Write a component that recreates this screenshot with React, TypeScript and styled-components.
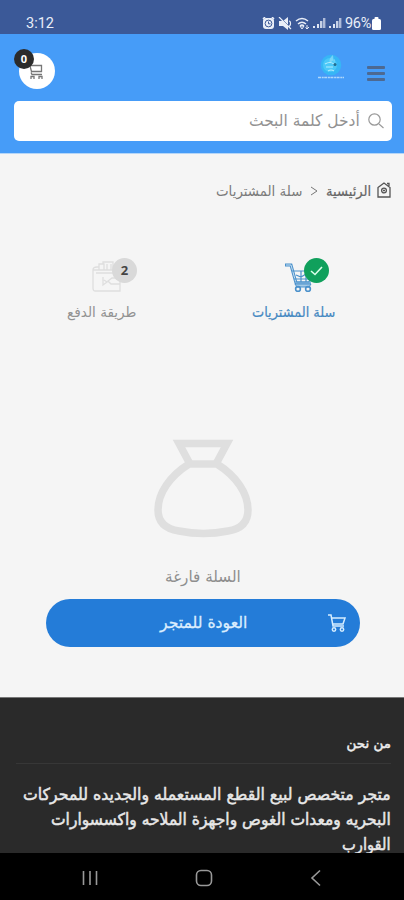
import React, { useLayoutEffect, useRef, useState } from "react";
import styled, { createGlobalStyle } from "styled-components";

const Global = createGlobalStyle`
  * { box-sizing: border-box; }
  body { margin: 0; overflow: hidden; background: #f5f5f5; }
`;
const Screen = styled.div`
  width: 404px; height: 900px; display: flex; flex-direction: column; overflow: hidden;
  background: #f5f5f5; font-family: "DejaVu Sans", "Noto Sans", sans-serif;
`;
const StatusBar = styled.div`
  direction: ltr; height: 34px; flex: none; background: #3b5998; color: #e9eef8;
  display: flex; justify-content: space-between; padding: 13px 23px 0 26px;
  font: 14.5px/21px Roboto, sans-serif;
`;
const StatusRight = styled.div`
  display: flex; align-items: center; height: 20px;
  svg { display: block; margin-right: 3px; }
  svg:last-child { margin: 0; }
`;
const Percent = styled.span`font-size: 14.5px; letter-spacing: -0.3px; margin-right: 1px;`;
const Header = styled.header`
  height: 120px; flex: none; background: #469cf8; padding: 18px 12px 0 14px;
  border-bottom: 1px solid #b5d6f8;
`;
const HeaderRow = styled.div`display: flex; height: 48px; align-items: flex-start;`;
const MenuLines = styled.div`
  width: 18px; margin: 14px 7px 0 22px; display: grid; gap: 3px;
  i { height: 3px; background: #4d6991; border-radius: 1px; }
`;
const CartButton = styled.div`
  position: relative; width: 36px; height: 36px; margin: 1px auto 0 5px; border-radius: 50%;
  background: #fff; display: grid; place-items: center;
  > svg { margin: 2px 0 0 -2px; }
`;
const CartCount = styled.span`
  position: absolute; left: -5px; top: -4px; width: 20px; height: 20px; border-radius: 50%;
  background: #2b2b2b; color: #fff; font: bold 11px/20px "Open Sans", sans-serif; text-align: center;
`;
const SearchBox = styled.div`
  height: 40px; margin-top: 1px; background: #fff; border-radius: 5px;
  display: flex; align-items: center; gap: 7px; padding-right: 7px;
`;
const Main = styled.main`height: 543px; flex: none; display: flex; flex-direction: column;`;
const Crumbs = styled.nav`
  display: flex; align-items: center; height: 22px; margin-top: 26px; padding-right: 13px;
  > svg { flex: none; }
`;
const HomeIcon = styled.svg`margin: 0 0 3px 6px;`;
const CrumbArrow = styled.svg`margin: 0 8px 0 8px;`;
const Steps = styled.div`
  display: grid; grid-template-columns: 192px 192px; margin-top: 55px; padding-right: 14px;
`;
const Step = styled.div`display: flex; flex-direction: column; align-items: center;`;
const StepIcon = styled.div`position: relative; width: 60px; height: 44px;`;
const StepBadge = styled.span<{ $done?: boolean }>`
  position: absolute; left: 40px; top: 1px; width: 25px; height: 25px; border-radius: 50%;
  display: grid; place-items: center; background: ${(p) => (p.$done ? "#10a05c" : "#d9d9d9")};
  color: #444; font: bold 13px/25px "Open Sans", sans-serif;
`;
const Empty = styled.section`
  display: flex; flex-direction: column; align-items: center; margin-top: 114px; padding-left: 2px;
`;
const BackButton = styled.button`
  width: 314px; height: 48px; margin: 8px 0 0; border: 0; border-radius: 24px; background: #247cd8;
  color: #dceefe; display: flex; align-items: center; padding: 0 13px 0 0; font-family: inherit; gap: 80px;
`;
const EmptyLabel = styled.div`margin-top: 23px;`;
const Footer = styled.footer`
  height: 156px; flex: none; background: #2a2a2a; overflow: hidden; padding: 31px 13px 0 16px;
  border-top: 1px solid #777;
`;
const Rule = styled.hr`border: 0; height: 1px; background: #373737; margin: 6px 0 18px;`;
const NavBar = styled.div`
  height: 47px; flex: none; background: #000; direction: ltr; display: flex; align-items: center;
  padding: 3px 82px 0 82px; justify-content: space-between;
`;
const FitBox = styled.div<{ $w: number; $h: number }>`
  width: ${(p) => p.$w}px; height: ${(p) => p.$h}px; flex: none; direction: rtl; white-space: nowrap;
`;
const FitInner = styled.span<{ $size: number; $h: number; $color: string; $weight: number }>`
  display: inline-block; transform-origin: right center; font-size: ${(p) => p.$size}px;
  line-height: ${(p) => p.$h}px; color: ${(p) => p.$color}; -webkit-text-stroke: ${(p) => p.$weight}px ${(p) => p.$color};
  vertical-align: top;
`;

type LabelProps = { text: string; width: number; size?: number; height?: number; color: string; weight?: number };

/* Condenses a single line of text to the width its slot offers. */
function Label({ text, width, size = 14, height = 22, color, weight = 0 }: LabelProps) {
  const ref = useRef<HTMLSpanElement>(null);
  const [scale, setScale] = useState(1);
  useLayoutEffect(() => {
    if (ref.current) setScale(width / ref.current.offsetWidth);
  }, [text, width, size]);
  return (
    <FitBox $w={width} $h={height}>
      <FitInner ref={ref} $size={size} $h={height} $color={color} $weight={weight} style={{ transform: `scaleX(${scale})` }}>
        {text}
      </FitInner>
    </FitBox>
  );
}

const Signal = () => (
  <svg width="13" height="12" viewBox="0 0 13 12" fill="#dfe6f4">
    <rect x="0" y="9" width="2" height="2" /><rect x="4" y="7" width="2" height="4" />
    <rect x="7" y="4" width="2.4" height="7" opacity=".85" /><rect x="10" y="1" width="2.4" height="10" opacity=".7" />
  </svg>
);

function StatusIcons() {
  return (
    <StatusRight>
      <svg width="13" height="12" viewBox="0 0 13 12">
        <rect x="1" y="1" width="11" height="11" rx="3" fill="#e9eef8" />
        <path d="M1 2l2-2M12 2l-2-2" stroke="#e9eef8" strokeWidth="1.5" />
        <circle cx="6.5" cy="6.5" r="3.4" fill="none" stroke="#3b5998" />
        <path d="M6.5 4.5v2.3h2" stroke="#3b5998" fill="none" />
      </svg>
      <svg width="14" height="13" viewBox="0 0 14 13">
        <path d="M1 4h4l5-4v13L5 9H1z" fill="#e9eef8" />
        <path d="M2 0l11 11" stroke="#3b5998" /><path d="M1 0l12 12M11 4c2 0 2 5 0 5" stroke="#e9eef8" strokeWidth="1.2" fill="none" />
      </svg>
      <svg width="15" height="13" viewBox="0 0 15 13" fill="none" stroke="#e9eef8" strokeWidth="1.5">
        <path d="M1 4q6-5 12 0M3 7q4-3.5 8 0M5 9q2-2 4 0" /><path d="M7 12l2-3H5zM12 8v4M10.5 10.5L12 12l2-2" strokeWidth="1" />
      </svg>
      <Signal />
      <Signal />
      <Percent>96%</Percent>
      <svg width="9" height="13" viewBox="0 0 9 13" fill="#fff"><rect x="0" y="2" width="9" height="11" rx="1.5" /><rect x="2.5" y="0" width="4" height="3" rx="1" /></svg>
    </StatusRight>
  );
}

const Logo = () => (
  <svg width="28" height="30" viewBox="0 0 28 30">
    <circle cx="14" cy="13" r="10.3" fill="#37b6f5" />
    <circle cx="13" cy="13" r="7" fill="#4bc8f8" />
    <path d="M16 3q-5 4-3 8l5-4-1 6" fill="#8bdcf8" opacity=".75" />
    <path d="M8 12q5-3 9 0M11 19q3-2 6 0M9 15h7" stroke="#c9f4ff" strokeWidth="1.2" fill="none" opacity=".8" />
    <circle cx="18" cy="12.5" r="1.5" fill="#236d91" />
    <path d="M1 25.5h26" stroke="#c2e2fb" strokeWidth="1.3" strokeDasharray="3 .7 2 .5" opacity=".85" />
  </svg>
);

const StepCart = () => (
  <svg width="30" height="29" viewBox="0 0 30 29" fill="none" stroke="#4b91cb">
    <path d="M1 2h6l5 18h15" strokeWidth="3" /><path d="M2 2h5l5 18h15" stroke="#c7e0f3" strokeWidth="1" />
    <path d="M8 8h20l-3 11H11M10 16h16M17 8v11M22 10v9M12 12l5 2 5-3" strokeWidth="1.2" />
    <path d="M11 21h16l-2 3H13z" fill="#a4cae7" /><circle cx="14" cy="26" r="2.4" strokeWidth="1.6" /><circle cx="24" cy="26" r="2.4" strokeWidth="1.6" />
  </svg>
);

const StepWallet = () => (
  <svg width="30" height="33" viewBox="0 0 30 33" fill="none" stroke="#dedede" strokeWidth="1.3">
    <path d="M1 9h27v21H3q-2 0-2-3zM1 9q0-3 4-3h2v3M7 9V3h5v6M11 3V1h10v8M15 3v6M19 3v6M4 12h20" />
    <path d="M28 17h-8l-4 3 3 3h9M11 16v8l4-3-3-2" />
  </svg>
);

export default function App() {
  return (
    <Screen dir="rtl">
      <Global />
      <StatusBar><span>3:12</span><StatusIcons /></StatusBar>
      <Header>
        <HeaderRow>
          <MenuLines><i /><i /><i /></MenuLines>
          <Logo />
          <CartButton>
            <svg width="16" height="16" viewBox="0 0 16 16" fill="none" stroke="#777" strokeWidth="1.3">
              <path d="M1 1.5h12.5v6H3.5L2 2M3 8.5l1 2h10" /><path d="M3 15v-2.5h3V15M11 15v-2.5h3V15" />
            </svg>
            <CartCount>0</CartCount>
          </CartButton>
        </HeaderRow>
        <SearchBox>
          <svg width="18" height="18" viewBox="0 0 18 18" fill="none" stroke="#999" strokeWidth="1.2"><circle cx="7.5" cy="7.5" r="5.7" /><path d="M12 12l4.5 4" /></svg>
          <Label text="أدخل كلمة البحث" width={111} size={16} color="#929292" />
        </SearchBox>
      </Header>
      <Main>
        <Crumbs>
          <HomeIcon width="14" height="16" viewBox="0 0 14 16" fill="none" stroke="#555" strokeWidth="1.3"><path d="M1 5.5L7 1l6 4.5V15H1zM10 1.5h2V4" /><circle cx="7" cy="8.5" r="2.4" /><path d="M6 8.5h2" /></HomeIcon>
          <Label text="الرئيسية" width={45} size={14} color="#666" weight={0.2} />
          <CrumbArrow width="8" height="10" viewBox="0 0 8 10" fill="none" stroke="#777"><path d="M1 1l6 4-6 4" /></CrumbArrow>
          <Label text="سلة المشتريات" width={86} size={14} color="#7b7b7b" />
        </Crumbs>
        <Steps>
          <Step>
            <StepIcon>
              <svg width="60" height="43" viewBox="0 0 60 43"><g transform="translate(20 6)"><StepCart /></g></svg>
              <StepBadge $done><svg width="13" height="10" viewBox="0 0 13 10" fill="none" stroke="#d9ffe9" strokeWidth="1.6"><path d="M1 5l4 3.5L12 1" /></svg></StepBadge>
            </StepIcon>
            <Label text="سلة المشتريات" width={83} size={14} color="#4689c2" weight={0.2} />
          </Step>
          <Step>
            <StepIcon>
              <svg width="60" height="43" viewBox="0 0 60 43"><g transform="translate(20 4)"><StepWallet /></g></svg>
              <StepBadge>2</StepBadge>
            </StepIcon>
            <Label text="طريقة الدفع" width={69} size={14} color="#929292" />
          </Step>
        </Steps>
        <Empty>
          <svg width="98" height="102" viewBox="0 0 98 102" fill="none" stroke="#dfdfdf" strokeWidth="7.5">
            <path d="M25 6.5h48L62 27H36zM35 27C16 39 4 56 4 73c0 13 8 19 21 21 15 3 34 3 49 0 13-2 20-9 20-21C94 56 82 39 63 27" />
          </svg>
          <EmptyLabel><Label text="السلة فارغة" width={76} height={29} size={16} color="#8e8e8e" /></EmptyLabel>
          <BackButton>
            <svg width="20" height="20" viewBox="0 0 20 20" fill="none" stroke="#d5edff" strokeWidth="1.5"><path d="M1 2h3l2 11h11M5 5h13l-2 6H6" /><circle cx="7" cy="16.5" r="1.7" /><circle cx="15" cy="16.5" r="1.7" /></svg>
            <Label text="العودة للمتجر" width={87} size={16} color="#dceefe" weight={0.3} />
          </BackButton>
        </Empty>
      </Main>
      <Footer>
        <Label text="من نحن" width={45} size={13.5} height={28} color="#ededed" weight={0.5} />
        <Rule />
        <Label text="متجر متخصص لبيع القطع المستعمله والجديده للمحركات" width={368} size={16.5} height={25} color="#e8e8e8" weight={0.5} />
        <Label text="البحريه ومعدات الغوص واجهزة الملاحه واكسسوارات" width={340} size={16.5} height={25} color="#e8e8e8" weight={0.5} />
        <Label text="القوارب" width={49} size={16.5} height={25} color="#e8e8e8" weight={0.5} />
      </Footer>
      <NavBar>
        <svg width="16" height="16" viewBox="0 0 16 16" stroke="#999" strokeWidth="1.6"><path d="M1.5 1v14M8 1v14M14.5 1v14" /></svg>
        <svg width="18" height="18" viewBox="0 0 18 18" fill="none" stroke="#999" strokeWidth="1.6"><rect x="1.5" y="1.5" width="15" height="15" rx="4.5" /></svg>
        <svg width="12" height="18" viewBox="0 0 12 18" fill="none" stroke="#999" strokeWidth="1.6"><path d="M10 1.5L2 9l8 7.5" /></svg>
      </NavBar>
    </Screen>
  );
}
